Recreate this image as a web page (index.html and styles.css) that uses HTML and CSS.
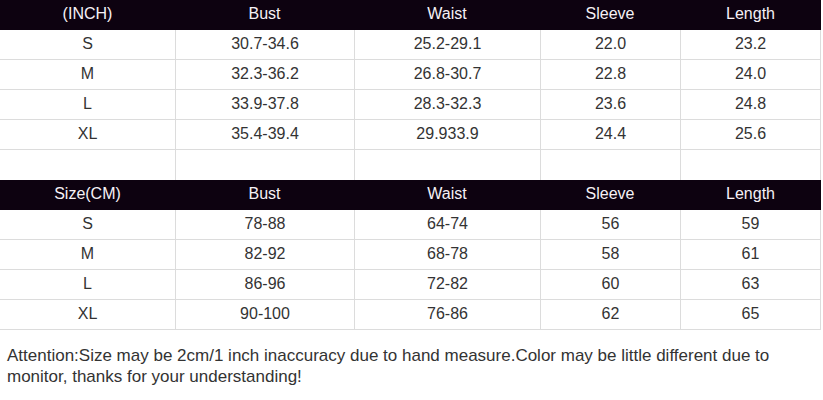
FILE: index.html
```html
<!DOCTYPE html>
<html>
<head>
<meta charset="utf-8">
<link rel="stylesheet" href="styles.css">
</head>
<body>
<div class="chart">
  <div class="row head"><div class="c">(INCH)</div><div class="c">Bust</div><div class="c">Waist</div><div class="c">Sleeve</div><div class="c">Length</div></div>
  <div class="row"><div class="c">S</div><div class="c">30.7-34.6</div><div class="c">25.2-29.1</div><div class="c">22.0</div><div class="c">23.2</div></div>
  <div class="row"><div class="c">M</div><div class="c">32.3-36.2</div><div class="c">26.8-30.7</div><div class="c">22.8</div><div class="c">24.0</div></div>
  <div class="row"><div class="c">L</div><div class="c">33.9-37.8</div><div class="c">28.3-32.3</div><div class="c">23.6</div><div class="c">24.8</div></div>
  <div class="row"><div class="c">XL</div><div class="c">35.4-39.4</div><div class="c">29.933.9</div><div class="c">24.4</div><div class="c">25.6</div></div>
  <div class="row blank"><div class="c"></div><div class="c"></div><div class="c"></div><div class="c"></div><div class="c"></div></div>
  <div class="row head"><div class="c">Size(CM)</div><div class="c">Bust</div><div class="c">Waist</div><div class="c">Sleeve</div><div class="c">Length</div></div>
  <div class="row"><div class="c">S</div><div class="c">78-88</div><div class="c">64-74</div><div class="c">56</div><div class="c">59</div></div>
  <div class="row"><div class="c">M</div><div class="c">82-92</div><div class="c">68-78</div><div class="c">58</div><div class="c">61</div></div>
  <div class="row"><div class="c">L</div><div class="c">86-96</div><div class="c">72-82</div><div class="c">60</div><div class="c">63</div></div>
  <div class="row"><div class="c">XL</div><div class="c">90-100</div><div class="c">76-86</div><div class="c">62</div><div class="c">65</div></div>
</div>
<p class="note">Attention:Size may be 2cm/1 inch inaccuracy due to hand measure.Color may be little different due to monitor, thanks for your understanding!</p>
</body>
</html>
```
FILE: styles.css
```css
html, body {
  margin: 0;
  padding: 0;
  background: #fff;
}
body {
  font-family: "Liberation Sans", Arial, sans-serif;
  font-size: 16px;
  color: #333;
}
.chart {
  width: 821px;
}
.row {
  display: grid;
  grid-template-columns: 175px 179px 186px 140px 141px;
  height: 30px;
  box-sizing: border-box;
  border-bottom: 1px solid #dcdcdc;
}
.c {
  display: flex;
  align-items: center;
  justify-content: center;
  box-sizing: border-box;
  border-left: 1px solid #dcdcdc;
  padding-bottom: 1px;
}
.c:first-child {
  border-left: none;
}
.c:last-child {
  border-right: 1px solid #dcdcdc;
}
.row.head {
  background: #0d0210;
  color: #f6f1f6;
  border-bottom: none;
}
.row.head .c {
  border: none;
  padding-bottom: 3px;
}
.row.blank {
  border-bottom: none;
}
.note {
  margin: 15px 0 0 0;
  padding: 0 7px;
  font-size: 17px;
  line-height: 21px;
  color: #333;
}
```
